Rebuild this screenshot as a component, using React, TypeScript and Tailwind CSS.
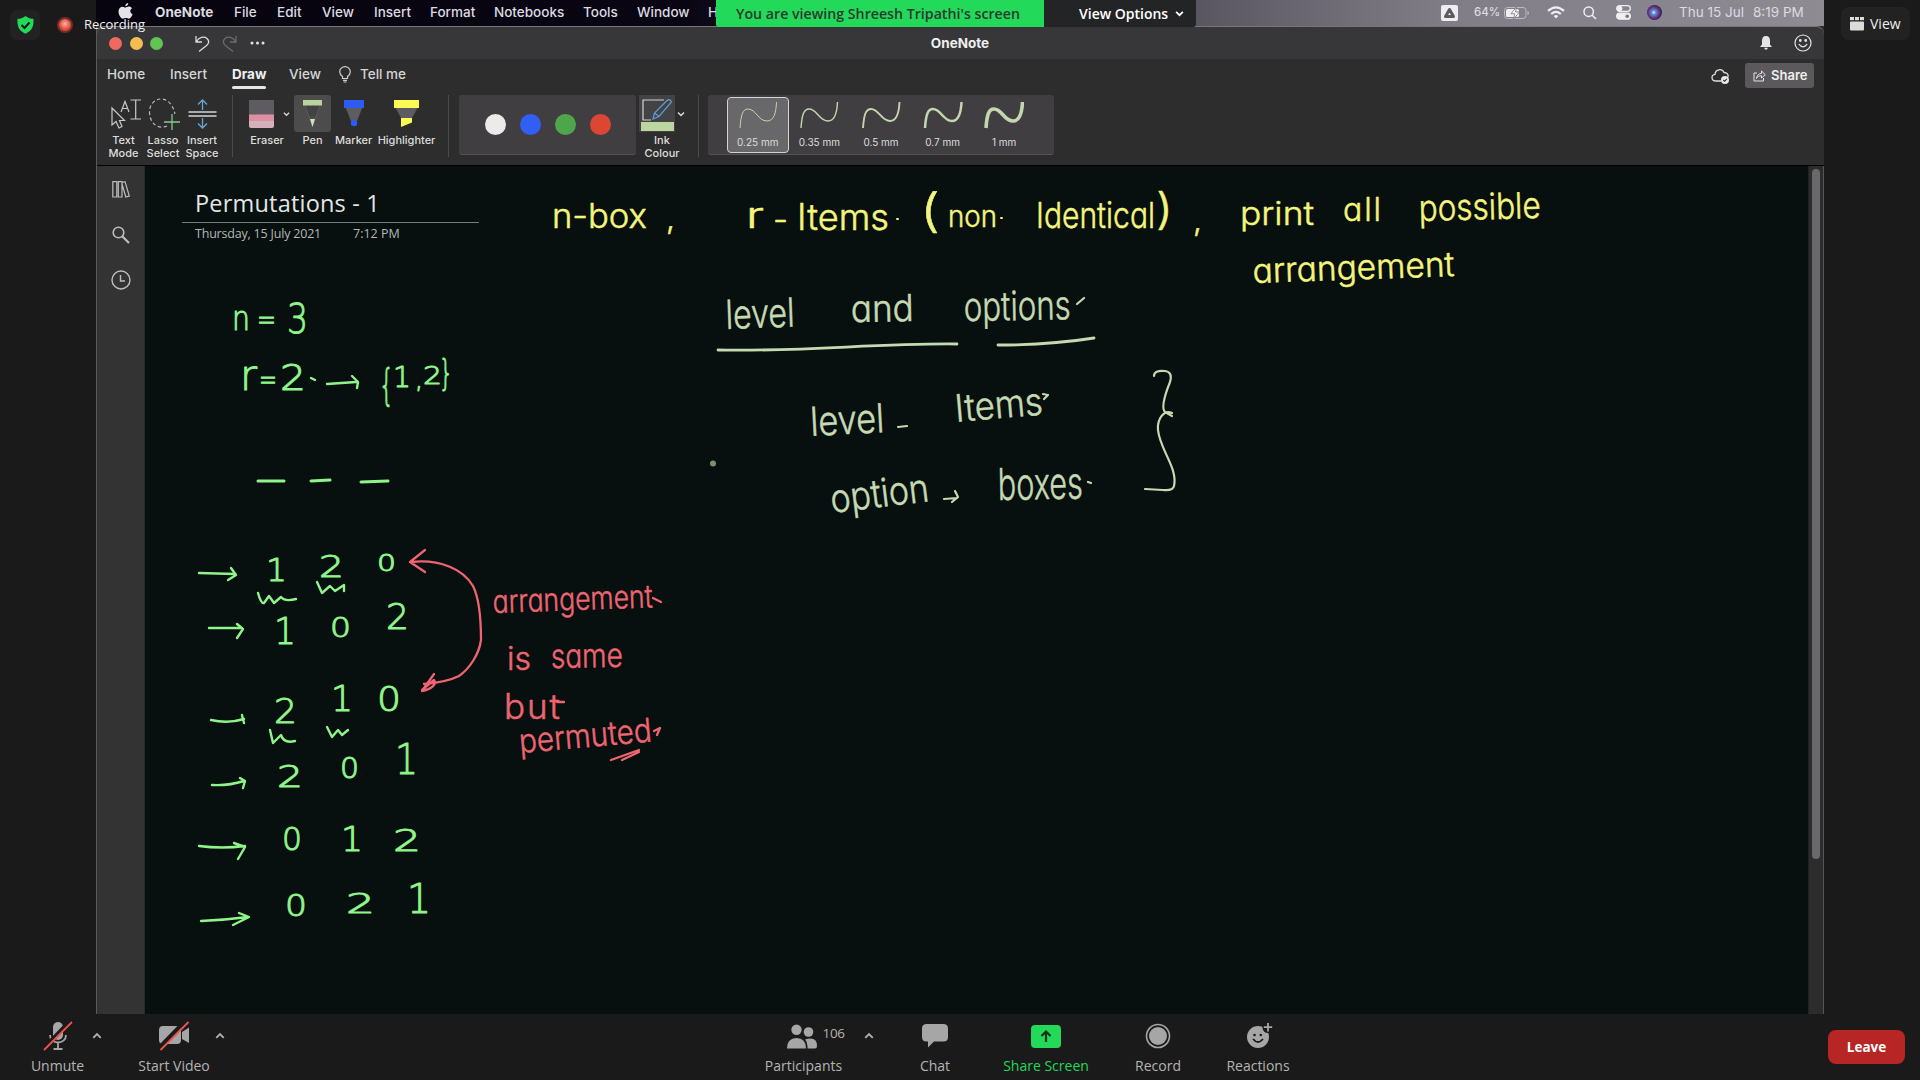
import React from "react";

const UI = "font-['Inter',sans-serif]";
const ZOOM = "font-['Open_Sans','Noto_Sans',sans-serif]";

const menus = [
  { t: "OneNote", c: "w-[79px] font-bold" },
  { t: "File", c: "w-[43px] font-medium" },
  { t: "Edit", c: "w-[45px] font-medium" },
  { t: "View", c: "w-[52px] font-medium" },
  { t: "Insert", c: "w-[56px] font-medium" },
  { t: "Format", c: "w-[64px] font-medium" },
  { t: "Notebooks", c: "w-[89px] font-medium" },
  { t: "Tools", c: "w-[54px] font-medium" },
  { t: "Window", c: "w-[71px] font-medium" },
  { t: "H", c: "w-[11px] font-medium" },
];

function Chevron({ up = false, s = 8, color = "#d8d8d8" }: { up?: boolean; s?: number; color?: string }) {
  return (
    <svg width={s} height={s} viewBox="0 0 8 8" fill="none" stroke={color} strokeWidth="1.5" className={up ? "rotate-180" : ""}>
      <path d="M1 2.5 L4 5.5 L7 2.5" />
    </svg>
  );
}

function MenuBar() {
  return (
    <div className="flex h-[26px] items-center bg-[linear-gradient(90deg,#07030f_0%,#090512_34%,#5a5762_64%,#817d87_78%,#8f8b93_100%)] text-[#dcdbe0]">
      <svg width="15" height="17" viewBox="0 0 15 17" className="ml-[22px] mb-1" fill="#e4e3e8">
        <path d="M10.2 0c.2 1.600-1.300 3.300-2.900 3.300C7.100 1.700 8.700.2 10.200 0zM7.600 4.500c.8 0 1.700-.9 3.300-.9 1.200 0 2.400.6 3.100 1.700-2.500 1.600-2.100 4.900.6 6-.6 1.700-2.100 4.400-3.700 4.400-1.200 0-1.600-.7-3-.7s-1.900.7-3 .7C2.900 15.700.5 12 .5 8.600c0-3.200 2-4.900 4-4.900 1.300 0 2.300.8 3.100.8z" />
      </svg>
      <div className={"ml-[22px] flex w-[566px] whitespace-nowrap text-[13.500px] leading-[26px] " + UI}>
        {menus.map((m) => (
          <span key={m.t} className={"shrink-0 pb-0.5 leading-6 " + m.c}>{m.t}</span>
        ))}
      </div>
      <div className="ml-auto flex items-center pr-[18px] pb-px">
        <div className="grid h-4 w-[17px] place-items-center rounded-[2px] bg-[#eeeef0]">
          <svg width="13" height="12" viewBox="0 0 13 12" fill="none" stroke="#5d5a63" strokeWidth="3" strokeLinejoin="round"><path d="M6.500 2.500 L10.500 9.500 H2.500 Z" /></svg>
        </div>
        <span className={"ml-4 w-[30px] text-[11.500px] font-medium " + UI}>64%</span>
        <svg width="26" height="12" viewBox="0 0 26 12" fill="none">
          <rect x=".5" y=".5" width="21.500" height="11" rx="3" stroke="#bdbac0" />
          <rect x="2" y="2" width="13" height="8" rx="1.500" fill="#efeff1" />
          <path d="M12.500 0 L7 6.700 H10.800 L9.500 12 L15.500 5 H11.500 Z" fill="#fff" stroke="#77737d" strokeWidth=".8" />
          <path d="M23.500 4 v4 q1.500-.5 1.500-2t-1.500-2" fill="#bdbac0" />
        </svg>
        <svg width="18" height="13" viewBox="0 0 18 13" fill="none" stroke="#efeff1" strokeWidth="2.200" className="ml-[17px]">
          <path d="M1 4.800 Q9-2.200 17 4.800" /><path d="M4.200 8 Q9 3.800 13.800 8" /><path d="M9 12.500 L6.600 10 Q9 8 11.400 10Z" fill="#efeff1" stroke="none" />
        </svg>
        <svg width="14" height="14" viewBox="0 0 14 14" fill="none" stroke="#efeff1" strokeWidth="1.500" className="ml-[18px]"><circle cx="5.700" cy="5.700" r="4.700" /><path d="M9.200 9.200 L13 13" /></svg>
        <svg width="15" height="15" viewBox="0 0 15 15" fill="none" stroke="#efeff1" strokeWidth="1.300" className="ml-[19px]">
          <rect x=".7" y=".7" width="13.600" height="5.600" rx="2.800" /><circle cx="3.700" cy="3.500" r="2" fill="#efeff1" />
          <rect x=".7" y="8.200" width="13.600" height="6" rx="3" fill="#efeff1" /><circle cx="11.200" cy="11.200" r="1.800" fill="#77737d" stroke="none" />
        </svg>
        <div className="ml-4 h-[15px] w-[15px] rounded-full bg-[radial-gradient(circle_at_45%_50%,#f4e8ff_0%,#5a9ad8_18%,#6b3b8f_45%,#2a1d40_75%)]" />
        <span className={"ml-[17px] w-[74px] whitespace-nowrap text-[13.500px] " + UI}>Thu 15 Jul</span>
        <span className={"w-[53px] whitespace-nowrap text-[13.500px] " + UI}>8:19 PM</span>
      </div>
    </div>
  );
}

function TitleBar() {
  return (
    <div className="grid h-[33px] grid-cols-3 items-center rounded-t-[8px] border-t border-[#77767a] bg-[#373739]">
      <div className="flex items-center pl-[12px]">
        <i className="h-[13px] w-[13px] rounded-full bg-[#ee6a5f]" />
        <i className="ml-[7.500px] h-[13px] w-[13px] rounded-full bg-[#f5bd4f]" />
        <i className="ml-[7.500px] h-[13px] w-[13px] rounded-full bg-[#61c454]" />
        <svg width="15" height="17" viewBox="0 0 15 17" fill="none" stroke="#dcdcdc" strokeWidth="1.300" className="ml-8"><path d="M1 1 V7 H7 M1 7 C4 2 9 1 12 3.500 C15 6.500 13.500 9 11 11 L4 16.500" /></svg>
        <svg width="15" height="17" viewBox="0 0 15 17" fill="none" stroke="#6b6b6d" strokeWidth="1.300" className="ml-3 -scale-x-100"><path d="M1 1 V7 H7 M1 7 C4 2 9 1 12 3.500 C15 6.500 13.500 9 11 11 L4 16.500" /></svg>
        <svg width="15" height="4" viewBox="0 0 15 4" fill="#e4e4e4" className="ml-[13px]"><circle cx="2" cy="2" r="1.500" /><circle cx="7.500" cy="2" r="1.500" /><circle cx="13" cy="2" r="1.500" /></svg>
      </div>
      <span className={"pr-px text-center text-[13.500px] font-bold text-[#f0f0f0] " + UI}>OneNote</span>
      <div className="flex items-center justify-end pr-3">
        <svg width="12" height="14" viewBox="0 0 12 14" fill="#e4e4e4"><path d="M6 0 C8.800 0 10 2 10 4.500 V8.500 L12 11 H0 L2 8.500 V4.500 C2 2 3.200 0 6 0Z M4.200 11.800 H7.800 C7.500 14.400 4.500 14.400 4.200 11.800Z" /></svg>
        <svg width="18" height="18" viewBox="0 0 18 18" fill="none" stroke="#e4e4e4" strokeWidth="1.200" className="ml-[22px]"><circle cx="9" cy="9" r="8" /><path d="M4.800 10.200 Q9 15.500 13.200 10.200" /><circle cx="6.300" cy="6.500" r=".8" fill="#e4e4e4" /><circle cx="11.700" cy="6.500" r=".8" fill="#e4e4e4" /></svg>
      </div>
    </div>
  );
}

function Tabs() {
  return (
    <div className={"flex h-[31px] items-center text-[13.500px] font-medium text-[#d6d6d6] " + UI}>
      <span className="ml-[10px] w-[63px]">Home</span>
      <span className="w-[62px]">Insert</span>
      <span className="relative mr-[22px] w-[35px] font-bold text-[#f0f0f0]">Draw<i className="absolute -bottom-[4px] left-0 h-[3px] w-[34px] rounded-sm bg-[#e6e6e6]" /></span>
      <span className="w-[50px]">View</span>
      <svg width="12" height="17" viewBox="0 0 12 17" fill="none" stroke="#cfcfcf" strokeWidth="1.200"><path d="M3.500 12.500 V10.500 C1.500 9 .7 7.500 .7 5.700 A5.300 5.100 0 0 1 11.300 5.700 C11.300 7.500 10.500 9 8.500 10.500 V12.500 Z M4 14.300 H8 M4.500 16 H7.500" /></svg>
      <span className="ml-[9px]">Tell me</span>
      <svg width="19" height="17" viewBox="0 0 19 17" fill="none" className="ml-auto mt-1" stroke="#e0e0e0" strokeWidth="1.300"><path d="M10 13 H5 C-.3 13 0 6.500 4 6.300 C4.500 1 11 .2 13 4.500 C16 4.500 17.800 6.500 17 9" /><circle cx="14" cy="12" r="4" fill="#e8e8e8" stroke="none" /><path d="M12.300 12 L13.600 13.300 L15.800 10.800" stroke="#2d2d2d" strokeWidth="1.100" /></svg>
      <div className="ml-[15px] mr-[10px] mt-[2px] flex h-[25px] w-[69px] items-center gap-[5px] rounded-[3px] bg-[#5b595c] pl-[8px] text-[13px] font-semibold text-[#eee]">
        <svg width="13" height="13" viewBox="0 0 13 13" fill="none" stroke="#e4e4e4" strokeWidth="1"><path d="M4 4 H1 V12 H10.500 V9" /><path d="M3.500 9.500 C4 6 6 4.500 8.500 4.500 V2 L12.300 5.700 L8.500 9 V6.800 C6 6.800 4.500 7.500 3.500 9.500Z" /></svg>
        Share
      </div>
    </div>
  );
}

const label = "text-center text-[11px] font-medium leading-[12.500px] text-[#dedede] whitespace-nowrap";

function Tool({ w, lines, children, iconClass = "justify-center" }: { w: string; lines: string[]; children: React.ReactNode; iconClass?: string }) {
  return (
    <div className={"flex shrink-0 flex-col " + w}>
      <div className={"flex h-[37px] items-center " + iconClass}>{children}</div>
      <div className={"mt-[2px] " + label}>{lines.map((l) => <div key={l}>{l}</div>)}</div>
    </div>
  );
}

const widths = [
  { t: "0.25 mm", s: 1, b: "border-[#d4d4d4] bg-[#68676a]" },
  { t: "0.35 mm", s: 1.4, b: "border-transparent" },
  { t: "0.5 mm", s: 1.9, b: "border-transparent" },
  { t: "0.7 mm", s: 2.5, b: "border-transparent" },
  { t: "1 mm", s: 3.6, b: "border-transparent" },
];

function Ribbon() {
  return (
    <div className={"flex h-[76px] items-start border-b border-black pt-[5px] " + UI}>
      <Tool w="ml-[7px] w-[39px]" lines={["Text", "Mode"]}>
        <svg width="32" height="30" viewBox="0 0 32 30" fill="none" stroke="#c9c9c9" strokeWidth="1.200" className="ml-1"><path d="M2 9 V26 L6 22.500 L9 29 L12 27.500 L9.500 21.500 H14.500 Z" /><path d="M11 13 L15 2.500 L19 13 M12.300 9.500 H17.700" /><path d="M20.500 1 H31 M20.500 20 H31 M25.700 1 V20" /></svg>
      </Tool>
      <Tool w="w-[40px]" lines={["Lasso", "Select"]}>
        <svg width="32" height="32" viewBox="0 0 32 32" fill="none" className="ml-0.5"><path d="M19 28 C10 32 1.500 25 1.500 14 C1.500 6 7 1 13 1 C20 1 25 7 27 16" stroke="#b9b9b9" strokeWidth="1.200" strokeDasharray="3.500 2.500" /><path d="M24 16 V32 M16 24 H32" stroke="#86c98a" strokeWidth="1.300" /></svg>
      </Tool>
      <Tool w="w-[38px]" lines={["Insert", "Space"]}>
        <svg width="29" height="30" viewBox="0 0 29 30" fill="none"><path d="M.5 13 H28.500 M.5 17 H28.500" stroke="#d4d4d4" strokeWidth="1.300" /><path d="M14.500 11 V1 M10 5.500 L14.500 1 L19 5.500 M14.500 19 V29 M10 24.500 L14.500 29 L19 24.500" stroke="#69a5d6" strokeWidth="1.300" /></svg>
      </Tool>
      <i className="ml-[11px] h-[62px] w-px bg-[#4b4b4b]" />
      <Tool w="ml-[13px] -mr-[5px] w-[42px]" lines={["Eraser"]} iconClass="pl-[3px]">
        <svg width="25" height="28" viewBox="0 0 25 28"><rect width="25" height="15" fill="#5e5c60" /><rect y="14.500" width="25" height="8" fill="#dd8fa4" /><path d="M0 21 H25 V26 Q25 28 23 28 H2 Q0 28 0 26Z" fill="#d4b0ba" /></svg>
      </Tool>
      <div className="flex h-[37px] w-[7px] shrink-0 items-center"><Chevron s={8} /></div>
      <Tool w="w-[45px]" lines={["Pen"]}>
        <div className="grid h-[37px] w-[37px] place-items-center rounded-[3px] bg-[#4c4c4d]">
          <svg width="19" height="29" viewBox="0 0 19 29"><path d="M2 6 L7 18 H12 L17 6Z" fill="#424242" /><path d="M2 6 L9.500 28 L17 6" fill="none" stroke="#5f5f5f" strokeWidth=".6" /><rect y="1" width="19" height="5.500" fill="#b9d39c" /><path d="M7 20 H12 L9.500 28Z" fill="#cfe3b4" /></svg>
        </div>
      </Tool>
      <Tool w="w-[37px]" lines={["Marker"]}>
        <svg width="20" height="27" viewBox="0 0 20 27"><path d="M1 6 H19 L13 21 H7Z" fill="#5e5c60" /><rect width="20" height="8" fill="#2c5cf2" /><circle cx="10" cy="23" r="3.200" fill="#2c5cf2" /></svg>
      </Tool>
      <Tool w="w-[69px]" lines={["Highlighter"]}>
        <svg width="25" height="27" viewBox="0 0 25 27"><path d="M1 7 H24 L18 18 H7Z" fill="#5e5c60" /><rect width="25" height="8" fill="#fbfb55" /><path d="M7 18 H18 V22.500 L7 27Z" fill="#fbfb55" /></svg>
      </Tool>
      <i className="ml-[7px] h-[62px] w-px bg-[#4b4b4b]" />
      <div className="ml-[10px] flex h-[60px] w-[177px] items-center gap-[14px] rounded-[3px] border-b border-[#555356] bg-[#403e41] pl-[26px]">
        <i className="h-[21px] w-[21px] rounded-full bg-[#edebea]" />
        <i className="h-[21px] w-[21px] rounded-full bg-[#315ff3]" />
        <i className="h-[21px] w-[21px] rounded-full bg-[#4ea64b]" />
        <i className="h-[21px] w-[21px] rounded-full bg-[#dd4632]" />
      </div>
      <Tool w="ml-[3px] w-[46px]" lines={["Ink", "Colour"]} iconClass="justify-start">
        <div className="flex h-[37px] w-[36px] shrink-0 flex-col items-center bg-[#434244] pt-[4px]">
          <svg width="32" height="22" viewBox="0 0 32 22" fill="none" className="overflow-visible"><path d="M23 1 H2 V21 H10" stroke="#d4d4d4" strokeWidth="1.200" /><path d="M12 20 L13.500 14 L26 1.500 Q29-.5 30.500 3 L18 17.500 Z M13.500 14 L18 17.500" stroke="#5c9bd4" strokeWidth="1.300" /></svg>
          <i className="mt-[1px] h-[9px] w-[33px] bg-[#bcd6a0]" />
        </div>
        <div className="ml-[2px]"><Chevron s={8} /></div>
      </Tool>
      <i className="ml-[13px] h-[62px] w-px bg-[#4b4b4b]" />
      <div className="ml-[9px] flex h-[60px] w-[346px] items-center rounded-[3px] border-b border-[#555356] bg-[#403e41] pl-[19px]">
        {widths.map((p) => (
          <div key={p.t} className={"flex h-[56px] w-[61.600px] flex-col items-center rounded-[4px] border " + p.b}>
            <svg width="40" height="30" viewBox="0 0 40 30" fill="none" stroke="#c3d6ae" strokeWidth={p.s} className="mt-[2px] shrink-0"><path d="M2 28 C3 14 5 9 10 9 C18 9 20 21 29 21 C36 21 38 13 38.500 2" /></svg>
            <span className="mt-[5px] text-[10px] leading-[15px] text-[#dedede]">{p.t}</span>
          </div>
        ))}
      </div>
    </div>
  );
}

/* loose: spread the letters to reach the width instead of stretching them */
type Word = { t: string; x: number; y: number; w: number; s: number; r?: number; loose?: boolean };

const green: Word[] = [
  { t: "n", x: 232, y: 330, w: 18, s: 34 }, { t: "=", x: 257, y: 330, w: 19, s: 30 }, { t: "3", x: 287, y: 333, w: 21, s: 41 },
  { t: "r", x: 240, y: 390, w: 17, s: 42 }, { t: "=", x: 259, y: 390, w: 18, s: 30 }, { t: "2", x: 280, y: 390, w: 26, s: 36 },
  { t: "{", x: 379, y: 400, w: 15, s: 43 }, { t: "1", x: 393, y: 387, w: 18, s: 29 }, { t: ",", x: 415, y: 388, w: 8, s: 26 },
  { t: "2", x: 423, y: 384, w: 19, s: 25 }, { t: "}", x: 439, y: 385, w: 14, s: 35 },
  { t: "1", x: 266, y: 581, w: 21, s: 32 }, { t: "2", x: 319, y: 577, w: 25, s: 30 }, { t: "0", x: 377, y: 571, w: 19, s: 23 },
  { t: "1", x: 274, y: 644, w: 22, s: 38 }, { t: "0", x: 330, y: 637, w: 21, s: 27 }, { t: "2", x: 386, y: 629, w: 23, s: 35 },
  { t: "2", x: 274, y: 723, w: 23, s: 34 }, { t: "1", x: 331, y: 711, w: 22, s: 35 }, { t: "0", x: 377, y: 711, w: 24, s: 33 },
  { t: "2", x: 277, y: 787, w: 26, s: 30 }, { t: "0", x: 340, y: 778, w: 19, s: 28 }, { t: "1", x: 395, y: 774, w: 23, s: 42 },
  { t: "0", x: 282, y: 850, w: 20, s: 32 }, { t: "1", x: 341, y: 851, w: 22, s: 34 }, { t: "2", x: 393, y: 851, w: 28, s: 30 },
  { t: "0", x: 285, y: 916, w: 22, s: 31 }, { t: "2", x: 346, y: 913, w: 29, s: 27 }, { t: "1", x: 407, y: 913, w: 24, s: 40 },
];

const yellow: Word[] = [
  { t: "n-box", x: 552, y: 228, w: 95, s: 34 }, { t: ",", x: 666, y: 229, w: 9, s: 30 },
  { t: "r", x: 746, y: 228, w: 18, s: 36 }, { t: "-", x: 773, y: 232, w: 15, s: 34 },
  { t: "Items", x: 797, y: 230, w: 92, s: 37 }, { t: "(", x: 920, y: 227, w: 20, s: 46 }, { t: "non", x: 948, y: 227, w: 49, s: 30 },
  { t: "Identical", x: 1036, y: 228, w: 119, s: 36 }, { t: ")", x: 1156, y: 224, w: 17, s: 43 }, { t: ",", x: 1193, y: 231, w: 9, s: 30 },
  { t: "print", x: 1240, y: 225, w: 74, s: 33 }, { t: "all", x: 1343, y: 221, w: 38, s: 32, loose: true }, { t: "possible", x: 1419, y: 221, w: 122, s: 36, r: -1.5 },
  { t: "arrangement", x: 1253, y: 283, w: 202, s: 34, r: -2 },
];

const pale: Word[] = [
  { t: "level", x: 726, y: 329, w: 69, s: 40, r: -2 }, { t: "and", x: 851, y: 322, w: 63, s: 37, r: -1 }, { t: "options", x: 964, y: 321, w: 107, s: 40, r: -1 },
  { t: "level", x: 811, y: 436, w: 74, s: 40, r: -3 }, { t: "Items", x: 956, y: 422, w: 88, s: 38, r: -5 },
  { t: "option", x: 832, y: 513, w: 99, s: 39, r: -7 }, { t: "boxes", x: 998, y: 500, w: 85, s: 44, r: -1 },
];

const red: Word[] = [
  { t: "arrangement", x: 493, y: 613, w: 160, s: 32, r: -2 }, { t: "is", x: 507, y: 670, w: 24, s: 32, loose: true }, { t: "same", x: 551, y: 668, w: 72, s: 33, r: -1 },
  { t: "but", x: 504, y: 719, w: 56, s: 35, loose: true }, { t: "permuted", x: 520, y: 753, w: 133, s: 33, r: -5 },
];

function Ink({ words, color, digits = false }: { words: Word[]; color: string; digits?: boolean }) {
  return (
    <g fill={color} stroke={color} strokeWidth={digits ? 1 : 0.5} strokeLinejoin="round"
      className={digits ? "font-['DejaVu_Sans','DejaVu_Sans_Light',sans-serif] font-extralight" : "font-['Inter',sans-serif] font-light [font-feature-settings:'cv11']"}>
      {words.map((w, i) => (
        <text key={i} x={w.x} y={w.y} fontSize={w.s} textLength={w.w} lengthAdjust={w.loose ? "spacing" : "spacingAndGlyphs"} transform={`rotate(${w.r ?? 0} ${w.x} ${w.y})`}>{w.t}</text>
      ))}
    </g>
  );
}

function Drawing() {
  return (
    <svg viewBox="145 166 1663 848" width="1663" height="848" fill="none" strokeLinecap="round" strokeLinejoin="round" className="absolute inset-0">
      <Ink words={green} color="#8ff58a" digits />
      <Ink words={yellow} color="#f4f57c" />
      <Ink words={pale} color="#c5dab2" />
      <Ink words={red} color="#ee6571" />
      <g stroke="#8ff58a" strokeWidth="2.400">
        <path d="M311 378 L315 380 M327 384 L356 382 M352 376 L358 382 L357 388" />
        <path d="M258 481 H284 M311 481 L330 480 M361 482 L388 481" strokeWidth="3" />
        <path d="M199 573 L235 574 M231 568 L236 575 L228 580" />
        <path d="M209 628 H242 M237 624 L243 629 L237 638" />
        <path d="M211 720 Q228 724 244 719 M242 715 L244 723" />
        <path d="M212 785 Q228 786 244 781 M240 778 L245 781 L243 788" />
        <path d="M199 846 Q222 849 245 846 M234 843 L245 847 L238 859" />
        <path d="M201 921 Q225 920 248 917 M239 913 L249 917 L233 925" />
        <path d="M258 593 Q261 604 264 603 L269 596 L274 603 L281 597 Q285 602 296 599" />
        <path d="M317 582 L322 593 L330 586 L335 591 L344 585 V591" />
        <path d="M270 730 L273 743 L281 735 Q284 744 295 741" />
        <path d="M327 727 L332 737 L338 730 L342 735 L348 730" />
      </g>
      <g stroke="#f4f57c" strokeWidth="2"><path d="M897 219 h1 M1001 218 h1" /></g>
      <g stroke="#c5dab2" strokeWidth="2.200">
        <path d="M718 350 C800 352 880 343 957 344 M998 345 Q1050 345 1094 338" strokeWidth="2.800" />
        <path d="M1077 304 L1084 298 M898 427 L907 426 M1043 394 L1048 395 L1044 399 M1088 482 L1091 483 M944 499 L957 498 M955 491 L958 497 L952 502" />
        <path d="M1154 376 Q1154 370 1165 371 Q1173 372 1170 382 Q1160 407 1165 412 L1172 416 M1172 413 C1164 409 1157 419 1158 430 C1160 450 1178 468 1174 486 Q1173 491 1163 490 L1145 489" />
      </g>
      <circle cx="713" cy="463.500" r="3" fill="#7a916e" />
      <g stroke="#ee6571" strokeWidth="2.300">
        <path d="M411 562 C440 559 463 569 473 586 C480 600 481 620 481 640 C479 655 469 669 459 676 C449 681 437 683 424 684 M425 550 L410 562 L425 572 M434 674 L422 691 C430 690 438 684 434 680 L422 690" />
        <path d="M653 598 L661 602 M654 731 L660 728 L657 735 M557 702 L564 702" />
        <path d="M611 760 L639 750 M622 760 L639 752" />
      </g>
    </svg>
  );
}

function Notebook() {
  return (
    <div className="flex min-h-0 flex-1 bg-[#070f0f]">
      <div className="flex w-[48px] shrink-0 flex-col items-center border-r border-[#292929] bg-[#333]">
        <svg width="18" height="17" viewBox="0 0 18 17" fill="none" stroke="#bdbdbd" strokeWidth="1.200" className="mt-[15px]"><path d="M.8 .7 H4.800 V16 H.8Z M6.300 .7 H10 V16 H6.300Z M10 1.500 L13 .7 L17.300 15 L13.800 16 L10 3" /></svg>
        <svg width="18" height="18" viewBox="0 0 18 18" fill="none" stroke="#bdbdbd" strokeWidth="1.600" className="mt-[28px]"><circle cx="6.500" cy="6.500" r="5.300" /><path d="M10.500 10.500 L17 17" strokeWidth="2.200" /></svg>
        <svg width="20" height="20" viewBox="0 0 20 20" fill="none" stroke="#bdbdbd" strokeWidth="1.400" className="mt-[26px]"><circle cx="10" cy="10" r="9" /><path d="M9.500 5 V11 H14" /></svg>
      </div>
      <div className="relative flex-1 overflow-hidden bg-[#070f0f]">
        <div className={"ml-[37px] w-[297px] pt-[12px] " + ZOOM}>
          <div className="flex h-[45px] items-center whitespace-nowrap border-b border-[#77797a] pl-[13px] pt-[8px] text-[23.500px] tracking-[0.200px] text-[#e4e6e6]">Permutations - 1</div>
          <div className="flex pl-[13px] text-[12.500px] leading-[21px] text-[#b4b8b8]"><span className="w-[158px] whitespace-nowrap tracking-[-0.200px]">Thursday, 15 July 2021</span><span>7:12 PM</span></div>
        </div>
        <Drawing />
      </div>
      <div className="flex w-[16px] shrink-0 justify-center border-x border-l-[#222] border-r-[#555] bg-[#2c2c2c] pt-[3px]">
        <i className="h-[690px] w-[8px] rounded-full bg-[#69696b]" />
      </div>
    </div>
  );
}

function Control({ w, label: l, children, green: g = false }: { w: string; label: string; children: React.ReactNode; green?: boolean }) {
  return (
    <div className={"flex shrink-0 flex-col items-center " + w}>
      <div className="flex h-[30px] items-center justify-center">{children}</div>
      <span className={"mt-[5px] whitespace-nowrap text-[14px] leading-[20px] " + (g ? "text-[#23d959]" : "text-[#b4b4b4]")}>{l}</span>
    </div>
  );
}

function BottomBar() {
  return (
    <div className={"flex h-[66px] items-start bg-[#1a1a1a] pt-[7px] " + ZOOM}>
      <Control w="ml-[17px] w-[81px]" label="Unmute">
        <svg width="30" height="30" viewBox="0 0 30 30" fill="none" stroke="#a6a6a6" strokeWidth="1.800"><rect x="10" y="1" width="10" height="18" rx="5" fill="#a6a6a6" stroke="none" /><path d="M7 14 C7 24 23 24 23 14 M15 22 V27 M10.500 28 H19.500" /><path d="M1 27 L28 -1" stroke="#1a1a1a" strokeWidth="4" /><path d="M1 29 L29 1" stroke="#ef5350" strokeWidth="1.800" /></svg>
      </Control>
      <div className="-ml-[6px] flex h-[30px] w-[10px] items-center"><Chevron up s={10} color="#b0b0b0" /></div>
      <Control w="ml-[32px] w-[80px]" label="Start Video">
        <svg width="32" height="30" viewBox="0 0 32 30" fill="#a6a6a6"><rect x="1" y="5" width="22" height="18" rx="4" /><path d="M24 11 L31 6.500 V22 L24 18Z" /><path d="M2 26 L28 -1" stroke="#1a1a1a" strokeWidth="4" /><path d="M2.500 29 L30.500 1" stroke="#ef5350" strokeWidth="1.800" /></svg>
      </Control>
      <div className="ml-[1px] flex h-[30px] w-[10px] items-center"><Chevron up s={10} color="#b0b0b0" /></div>
      <Control w="ml-[538px] w-[81px]" label="Participants">
        <div className="ml-[18px] flex w-[66px] items-center gap-[6px] pl-[7px]">
          <svg width="30" height="25" viewBox="0 0 30 25" fill="#a6a6a6" className="shrink-0"><circle cx="9.500" cy="5.700" r="5.200" /><path d="M0 24.500 Q0 14 9.500 14 T19 24.500Z" /><circle cx="21.500" cy="8" r="4.800" /><path d="M20.500 24.500 Q20.500 18 18 15.500 Q30 12 30 22 Q30 24.500 28 24.500Z" /></svg>
          <span className="pb-[5px] text-[13.500px] tracking-[-0.300px] text-[#b4b4b4]">106</span>
        </div>
      </Control>
      <div className="ml-[20px] flex h-[30px] w-[10px] items-center"><Chevron up s={10} color="#b0b0b0" /></div>
      <Control w="ml-[21px] w-[80px]" label="Chat">
        <svg width="26" height="24" viewBox="0 0 26 24" fill="#a6a6a6"><path d="M4.500 0 H21.500 Q26 0 26 4.500 V13 Q26 17.500 21.500 17.500 H12 L6 23.500 V17.500 H4.500 Q0 17.500 0 13 V4.500 Q0 0 4.500 0Z" /></svg>
      </Control>
      <Control w="ml-[21px] w-[100px]" label="Share Screen" green>
        <div className="grid h-[23px] w-[30px] place-items-center rounded-[4px] bg-[#23d959]"><svg width="12" height="13" viewBox="0 0 12 13" fill="none" stroke="#15301c" strokeWidth="2.200"><path d="M6 12 V2 M1.500 6 L6 1.500 L10.500 6" /></svg></div>
      </Control>
      <Control w="ml-[22px] w-[80px]" label="Record">
        <svg width="26" height="26" viewBox="0 0 26 26"><circle cx="13" cy="13" r="11.500" fill="none" stroke="#a6a6a6" strokeWidth="1.600" /><circle cx="13" cy="13" r="9" fill="#a6a6a6" /></svg>
      </Control>
      <Control w="ml-[20px] w-[80px]" label="Reactions">
        <svg width="28" height="28" viewBox="0 0 28 28" className="ml-1"><circle cx="12" cy="15" r="11" fill="#a6a6a6" /><circle cx="22" cy="5.500" r="5.500" fill="#1a1a1a" /><path d="M22 1 V9.500 M17.800 5.200 H26.200" stroke="#a6a6a6" strokeWidth="1.800" /><circle cx="8.500" cy="13" r="1.300" fill="#1a1a1a" /><circle cx="14.800" cy="13" r="1.300" fill="#1a1a1a" /><path d="M7 17 Q12 23 17 17" fill="none" stroke="#1a1a1a" strokeWidth="1.800" /></svg>
      </Control>
      <div className="mt-[9px] ml-auto mr-[15px] grid h-[34px] w-[77px] place-items-center rounded-[8px] bg-[#b82525] text-[13.500px] font-bold text-white">Leave</div>
    </div>
  );
}

export default function App() {
  return (
    <div className="relative flex h-[1080px] w-[1920px] flex-col overflow-hidden bg-[#1a1a1a]">
      <div className="flex min-h-0 flex-1">
        <div className="w-[96px] shrink-0" />
        <div className="flex w-[1728px] flex-col">
          <MenuBar />
          <div className="flex min-h-0 flex-1 flex-col border-l border-[#5a5a5a] bg-[#2d2d2d]">
            <TitleBar />
            <Tabs />
            <Ribbon />
            <Notebook />
          </div>
        </div>
      </div>
      <BottomBar />

      <div className={"absolute left-[10px] top-[10px] flex items-center " + ZOOM}>
        <div className="grid h-[30px] w-[30px] place-items-center rounded-[7px] bg-[#222]">
          <svg width="17" height="18" viewBox="0 0 17 18"><path d="M8.500 0 C11 2 14 2.800 16.500 2.800 C17 10 15 15 8.500 17.800 C2 15 0 10 .5 2.800 C3 2.800 6 2 8.500 0Z" fill="#23d959" /><path d="M4.500 9 L7.500 12 L12.500 6.500" fill="none" stroke="#1a1a1a" strokeWidth="2" /></svg>
        </div>
        <i className="ml-[17px] h-[16px] w-[16px] rounded-full border-2 border-[#742e27] bg-[radial-gradient(circle_at_50%_40%,#f6b4a8_0%,#e2523f_55%,#c23a2b_100%)]" />
        <span className="ml-[11px] text-[13px] text-[#efefef]">Recording</span>
      </div>
      <div className={"absolute left-[716px] top-0 flex h-[27px] text-[14.200px] leading-[27px] " + ZOOM}>
        <div className="w-[328px] whitespace-nowrap rounded-bl-[3px] bg-[#23d959] pr-[4px] text-center font-semibold text-[#2b3a30]">You are viewing Shreesh Tripathi's screen</div>
        <div className="flex w-[152px] items-center gap-[7px] whitespace-nowrap rounded-br-[3px] bg-[#222425] pl-[35px] text-[14px] font-semibold text-white">View Options <Chevron s={9} color="#fff" /></div>
      </div>
      <div className={"absolute left-[1841px] top-[7px] flex h-[33px] w-[69px] items-center gap-[6px] rounded-[8px] bg-[#222] pl-[9px] text-[14px] text-[#eee] " + ZOOM}>
        <svg width="14" height="14" viewBox="0 0 14 14" fill="#dcdcdc"><rect width="4" height="3.200" /><rect x="5" width="4" height="3.200" /><rect x="10" width="4" height="3.200" /><rect y="4.500" width="14" height="9" rx="1" /></svg>
        View
      </div>
    </div>
  );
}
